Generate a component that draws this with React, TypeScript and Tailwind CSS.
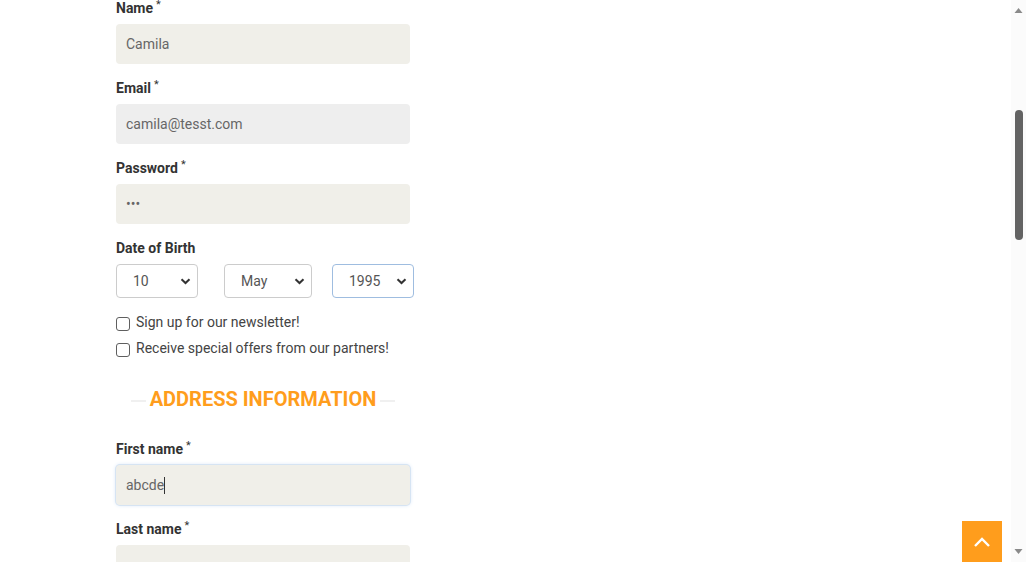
import { useLayoutEffect, useRef } from 'react';

function Label({ text, required }: { text: string; required?: boolean }) {
  return (
    <label className="block text-[14px] leading-[17px] font-bold text-[#333] mb-[7px]">
      {text}
      {required && <sup className="ml-[3px] text-[11px] font-normal">*</sup>}
    </label>
  );
}

function Field({
  label,
  value,
  required,
  bg = 'bg-[#f0efe9]',
  focused,
}: {
  label: string;
  value?: string;
  required?: boolean;
  bg?: string;
  focused?: boolean;
}) {
  return (
    <div className="mb-[16px]">
      <Label text={label} required={required} />
      <div
        className={`h-[40px] w-[294px] rounded-[4px] ${bg} px-[10px] flex items-center text-[14px] text-[#666] ${
          focused ? 'shadow-[0_0_0_1px_#d6e4f3,0_0_4px_#cfe0f5]' : ''
        }`}
      >
        {value}
        {focused && <span className="inline-block w-px h-[17px] bg-[#333]" />}
      </div>
    </div>
  );
}

function Select({ value, width, active }: { value: string; width: string; active?: boolean }) {
  return (
    <div
      className={`${width} h-[34px] rounded-[4px] border ${
        active ? 'border-[#9fbde0]' : 'border-[#cccccc]'
      } bg-white flex items-center pl-[16px] pr-[6px] text-[14px] text-[#555]`}
    >
      <span className="flex-1">{value}</span>
      <svg width="11" height="10" viewBox="0 0 11 10">
        <path d="M1.5 3.2 L5.5 7 L9.5 3.2" fill="none" stroke="#333" strokeWidth="2" />
      </svg>
    </div>
  );
}

function Checkbox({ text }: { text: string }) {
  return (
    <label className="flex items-center gap-[6px]">
      <input
        type="checkbox"
        className="m-0 mt-[3px] size-[14px] appearance-none rounded-[3px] border border-[#5f5f5f] bg-white"
      />
      {text}
    </label>
  );
}

function Scrollbar() {
  return (
    <div className="w-[15px] h-full bg-[#fbfbfb] flex flex-col items-center">
      <svg width="9" height="18" viewBox="0 0 9 18" className="shrink-0">
        <path d="M0.5 13 L4.5 8 L8.5 13 Z" fill="#8a8a8a" />
      </svg>
      <div className="w-full flex-1 flex flex-col items-center">
        <div className="h-[92px]" />
        <div className="w-[8px] h-[130px] rounded-full bg-[#636363]" />
      </div>
      <svg width="9" height="18" viewBox="0 0 9 18" className="shrink-0">
        <path d="M0.5 5 L4.5 10 L8.5 5 Z" fill="#8a8a8a" />
      </svg>
    </div>
  );
}

export default function App() {
  const scroller = useRef<HTMLDivElement>(null);
  const anchor = useRef<HTMLDivElement>(null);

  useLayoutEffect(() => {
    if (scroller.current && anchor.current) {
      scroller.current.scrollTop = anchor.current.offsetTop;
    }
  }, []);

  return (
    <div className="relative flex h-[562px] w-[1026px] bg-white font-['Roboto','Liberation_Sans',sans-serif]">
      <div ref={scroller} className="flex-1 h-full overflow-hidden">
        <div className="relative pl-[116px]">
          {/* above the fold */}
          <div className="h-[90px]" />
          <div className="w-[294px] text-center text-[20px] font-bold text-[#ff9d1c] mb-[30px]">
            PERSONAL INFORMATION
          </div>
          <div className="mb-[16px]">
            <Label text="Social title" />
            <div className="flex gap-[20px] text-[14px] text-[#444]">
              <span>Mr.</span>
              <span>Mrs.</span>
            </div>
          </div>
          <div className="h-[220px]" />

          <div ref={anchor}>
            <Field label="Name" value="Camila" required />
            <Field label="Email" value="camila@tesst.com" required bg="bg-[#eeeeee]" />
            <Field label="Password" value="•••" required />

            <div>
              <Label text="Date of Birth" />
              <div className="flex items-center">
                <Select value="10" width="w-[82px]" />
                <div className="ml-[26px]">
                  <Select value="May" width="w-[88px]" />
                </div>
                <div className="ml-[20px]">
                  <Select value="1995" width="w-[82px]" active />
                </div>
              </div>
            </div>

            <div className="mt-[14px] flex flex-col gap-[6px] text-[14px] leading-[20px] text-[#444]">
              <Checkbox text="Sign up for our newsletter!" />
              <Checkbox text="Receive special offers from our partners!" />
            </div>

            <div className="relative w-[294px] mt-[28px] mb-[29px] flex justify-center">
              <div className="absolute left-[15px] right-[15px] top-[14px] h-[2px] bg-[#f0f0f0]" />
              <span className="relative bg-white px-[4px] text-[20px] leading-[26px] font-bold text-[#ff9d1c]">
                ADDRESS INFORMATION
              </span>
            </div>

            <Field label="First name" value="abcde" required focused />
            <Field label="Last name" required />
            <Field label="Address" required />
            <Field label="Address (2)" />
            <Field label="City" required />
            <Field label="State" required />
            <Field label="Zip/Postal Code" required />
            <Field label="Country" value="United States" required />
            <Field label="Home phone" />
            <Field label="Mobile phone" required />
            <Field label="Assign an address alias for future reference" value="My address" required />
            <div className="h-[40px] w-[120px] bg-[#ff9d1c] text-white text-[14px] font-bold flex items-center justify-center rounded-[4px]">
              Register
            </div>
            <div className="h-[640px]" />
          </div>
        </div>
      </div>

      <Scrollbar />

      {/* back to top */}
      <button className="absolute left-[962px] top-[521px] w-[40px] h-[41px] bg-[#ff9d1c] flex items-center justify-center">
        <svg width="18" height="12" viewBox="0 0 18 12">
          <path d="M2 10 L9 3 L16 10" fill="none" stroke="white" strokeWidth="2.4" />
        </svg>
      </button>
    </div>
  );
}
